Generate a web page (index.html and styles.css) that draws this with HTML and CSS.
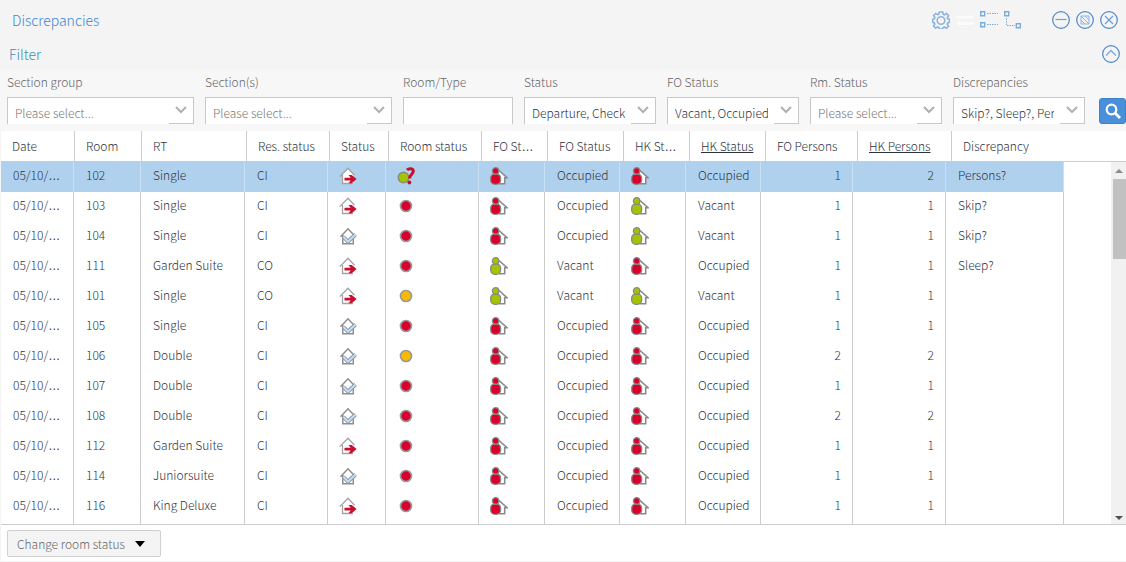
FILE: index.html
```html
<!DOCTYPE html>
<html lang="en">
<head>
<meta charset="utf-8">
<title>Discrepancies</title>
<link rel="stylesheet" href="styles.css">
</head>
<body>
<svg class="defs" aria-hidden="true">
  <symbol id="departure" viewBox="0 0 18 18">
    <path d="M3.500 8v8.500h11V8L9 2z" fill="#fff"/>
    <path d="M.7 9.600 9 1.200l6.500 7M3.500 8v8.500h10.500" fill="none" stroke="#a3a3a3" stroke-width="1.300"/>
    <path d="M5.500 10.800h6.200L9.500 8h3.200l4.900 4.100-4.900 4.200H9.500l2.200-2.800H5.500z" fill="#c8102e"/>
  </symbol>
  <symbol id="checkin" viewBox="0 0 18 18">
    <path d="M3.500 8v9h11V8L9 2z" fill="#fff"/>
    <path d="M1.500 9.800 9 1.800l7.500 8M3.800 8v8.800h10.500V9" fill="none" stroke="#8e8e8e" stroke-width="1.500"/>
    <path d="m4.500 10 4.500 4.500L16.500 7.500" fill="none" stroke="#8495aa" stroke-width="3.800"/>
    <path d="m4.500 10 4.500 4.500L16.500 7.500" fill="none" stroke="#c9dcf0" stroke-width="2"/>
  </symbol>
  <symbol id="person" viewBox="0 0 18 18">
    <path d="M8.500 3.500 15 9v7.500H8z" fill="#fff"/>
    <path d="m9 3.500 8 7.200h-2.300v6.100H9" fill="none" stroke="#8a8a8a" stroke-width="1.600"/>
    <rect x=".7" y="7" width="9.900" height="10.300" rx="4" fill="currentColor" stroke="#888" stroke-width="1.300"/>
    <circle cx="5.600" cy="3.900" r="3.200" fill="currentColor" stroke="#888" stroke-width="1.300"/>
  </symbol>
  <symbol id="dot" viewBox="0 0 18 18">
    <circle cx="9" cy="9" r="5.500" fill="currentColor" stroke="#999" stroke-width="1.700"/>
  </symbol>
  <symbol id="unknown" viewBox="0 0 18 18">
    <circle cx="6.500" cy="10.500" r="5.300" fill="#a5c400" stroke="#8a8a7a" stroke-width="1.400"/>
    <path d="M10 3c2-2 6.300-1.800 6.300 1.300 0 3-3.500 3-3.700 7.200" fill="none" stroke="#c8102e" stroke-width="3"/>
    <circle cx="12.400" cy="15.500" r="1.900" fill="#c8102e"/>
  </symbol>
</svg>

<main class="window">
  <header class="titlebar">
    <h1 class="title">Discrepancies</h1>
    <div class="tools">
      <button class="tool" aria-label="Settings"><svg viewBox="0 0 18 18" fill="none" stroke="#8db2e0" stroke-width="1.600"><path d="M7.300 1h3.400l.5 2.200 1.300.6 2-1.300 2.100 2.100-1.300 2 .5 1.200 1.700.5v3l-1.800.6-.5 1.300 1.300 1.900-2.100 2.200-2-1.300-1.200.5-.5 1.500H7.300l-.5-1.600-1.200-.5-2 1.300-2.100-2.200 1.300-1.900-.5-1.200L.7 11.300v-3l1.600-.5.6-1.300-1.300-2 2.100-2.100 2 1.300 1.100-.5z"/><circle cx="9" cy="9.500" r="3.800"/></svg></button>
      <button class="tool" aria-label="Swap"><svg viewBox="0 0 18 18" fill="#fbfbfb"><path d="M0 5h14V3l4 3-4 3V7.500H0zM18 11H4V9l-4 3.500L4 16v-2h14z"/></svg></button>
      <button class="tool" aria-label="List view"><svg viewBox="0 0 18 18" fill="none" stroke="#79add9"><path stroke-width="1.400" d="M.7.700h4v4h-4zM.7 11.700h4v4h-4z"/><path stroke-dasharray="1.500 1" d="M7 2.500h11M7 13.500h11"/></svg></button>
      <button class="tool" aria-label="Tree view"><svg viewBox="0 0 18 18" fill="none" stroke="#79add9"><path stroke-width="1.400" d="M.7.700h4v4h-4zM12.300 12.700h4v4h-4z"/><path stroke-dasharray="1.500 1" d="M2.500 7.500v7H11"/></svg></button>
    </div>
    <div class="controls">
      <button class="tool" aria-label="Minimize"><svg viewBox="0 0 18 18" fill="none" stroke="#6f9fdb"><circle cx="9" cy="9" r="8.300" stroke="#5089c4" stroke-width="1.200"/><path d="M3.500 8.500h11" stroke-width="1.200"/></svg></button>
      <button class="tool" aria-label="Restore"><svg viewBox="0 0 18 18" fill="none" stroke="#8fb2e6"><circle cx="9" cy="9" r="8.300" stroke="#5089c4" stroke-width="1.200"/><path d="M5 5h8v8H5zM5 5l8 8M5 9l4 4M9 5l4 4"/></svg></button>
      <button class="tool" aria-label="Close"><svg viewBox="0 0 18 18" fill="none" stroke="#6f9fdb"><circle cx="9" cy="9" r="8.300" stroke="#5089c4" stroke-width="1.200"/><path d="m5 5 8 8M13 5l-8 8" stroke-width="1.300"/></svg></button>
    </div>
  </header>

  <div class="filterbar">
    <h2 class="subtitle">Filter</h2>
    <button class="tool" aria-label="Collapse filter"><svg viewBox="0 0 18 18" fill="none" stroke="#86abe0"><circle cx="9" cy="9" r="8.300" stroke="#5089c4" stroke-width="1.200"/><path d="m4 10.500 5-5 5 5" stroke-width="1.500"/></svg></button>
  </div>

  <form class="filters">
    <label class="field">Section group<span class="box"><select class="input placeholder"><option>Please select...</option></select><svg class="arrow" viewBox="0 0 12 8"><path d="m1 1 5 5 5-5"/></svg></span></label>
    <label class="field">Section(s)<span class="box"><select class="input placeholder"><option>Please select...</option></select><svg class="arrow" viewBox="0 0 12 8"><path d="m1 1 5 5 5-5"/></svg></span></label>
    <label class="field">Room/Type<span class="box"><input class="input plain" type="text"></span></label>
    <label class="field">Status<span class="box"><select class="input"><option>Departure, Check</option></select><svg class="arrow" viewBox="0 0 12 8"><path d="m1 1 5 5 5-5"/></svg></span></label>
    <label class="field">FO Status<span class="box"><select class="input"><option>Vacant, Occupied</option></select><svg class="arrow" viewBox="0 0 12 8"><path d="m1 1 5 5 5-5"/></svg></span></label>
    <label class="field">Rm. Status<span class="box"><select class="input placeholder"><option>Please select...</option></select><svg class="arrow" viewBox="0 0 12 8"><path d="m1 1 5 5 5-5"/></svg></span></label>
    <label class="field">Discrepancies<span class="box"><select class="input"><option>Skip?, Sleep?, Per</option></select><svg class="arrow" viewBox="0 0 12 8"><path d="m1 1 5 5 5-5"/></svg></span></label>
    <button class="search" type="button" aria-label="Search"><svg viewBox="0 0 16 16" fill="none" stroke="#fff"><circle cx="6.500" cy="6.500" r="4.800" stroke-width="2.200"/><path d="m10 10 5 5" stroke-width="2.800"/></svg></button>
  </form>

  <section class="grid">
    <table class="head">
      <colgroup><col class="h1"><col class="h2"><col class="h3"><col class="h4"><col class="h5"><col class="h6"><col class="h7"><col class="h8"><col class="h9"><col class="h10"><col class="h11"><col class="h12"><col></colgroup>
      <thead><tr><th>Date</th><th>Room</th><th>RT</th><th>Res. status</th><th>Status</th><th>Room status</th><th>FO St<span class="dots">…</span></th><th>FO Status</th><th>HK St<span class="dots">…</span></th><th><u>HK Status</u></th><th>FO Persons</th><th><u>HK Persons</u></th><th>Discrepancy</th></tr></thead>
    </table>
    <div class="viewport">
      <table class="body">
        <colgroup><col class="b1"><col class="b2"><col class="b3"><col class="b4"><col class="b5"><col class="b6"><col class="b7"><col class="b8"><col class="b9"><col class="b10"><col class="b11"><col class="b12"><col class="b13"></colgroup>
        <tbody id="rows"></tbody>
      </table>
      <div class="scrollbar"><span class="up"></span><span class="thumb"></span><span class="down"></span></div>
    </div>
  </section>

  <footer class="footer">
    <button class="change">Change room status<span class="caret"></span></button>
  </footer>
</main>
<script src="rows.js"></script>
</body>
</html>
```
FILE: rows.js
```js
const rows = [
  ['102', 'Single', 'CI', 'departure', 'unknown', 'Occupied', 'Occupied', 1, 2, 'Persons?'],
  ['103', 'Single', 'CI', 'departure', 'red', 'Occupied', 'Vacant', 1, 1, 'Skip?'],
  ['104', 'Single', 'CI', 'checkin', 'red', 'Occupied', 'Vacant', 1, 1, 'Skip?'],
  ['111', 'Garden Suite', 'CO', 'departure', 'red', 'Vacant', 'Occupied', 1, 1, 'Sleep?'],
  ['101', 'Single', 'CO', 'departure', 'amber', 'Vacant', 'Vacant', 1, 1, ''],
  ['105', 'Single', 'CI', 'checkin', 'red', 'Occupied', 'Occupied', 1, 1, ''],
  ['106', 'Double', 'CI', 'checkin', 'amber', 'Occupied', 'Occupied', 2, 2, ''],
  ['107', 'Double', 'CI', 'checkin', 'red', 'Occupied', 'Occupied', 1, 1, ''],
  ['108', 'Double', 'CI', 'checkin', 'red', 'Occupied', 'Occupied', 2, 2, ''],
  ['112', 'Garden Suite', 'CI', 'departure', 'red', 'Occupied', 'Occupied', 1, 1, ''],
  ['114', 'Juniorsuite', 'CI', 'checkin', 'red', 'Occupied', 'Occupied', 1, 1, ''],
  ['116', 'King Deluxe', 'CI', 'departure', 'red', 'Occupied', 'Occupied', 1, 1, '']
];
const icon = (id, tone = '') => `<td class="ic"><svg class="icon ${tone}"><use href="#${id}"/></svg></td>`;
const person = (s) => icon('person', s === 'Vacant' ? 'green' : 'red');
document.getElementById('rows').innerHTML = rows.map((r, i) => `<tr${i ? '' : ' class="selected"'}>
  <td>05/10/<span class="dots">…</span></td><td>${r[0]}</td><td>${r[1]}</td><td>${r[2]}</td>${icon(r[3])}
  ${r[4] === 'unknown' ? icon('unknown') : icon('dot', r[4])}
  ${person(r[5])}<td>${r[5]}</td>${person(r[6])}<td>${r[6]}</td>
  <td class="num">${r[7]}</td><td class="num">${r[8]}</td><td>${r[9]}</td></tr>`).join('') +
  `<tr class="rest">${'<td></td>'.repeat(13)}</tr>`;
```
FILE: styles.css
```css
* { box-sizing: border-box; }
body {
  margin: 0;
  font: 300 12px/18px "Noto Sans CJK SC", "Open Sans", sans-serif;
  color: #2c3440;
}
button, input, select { font: inherit; color: inherit; }
.defs { position: absolute; width: 0; height: 0; }
.window {
  display: flex;
  flex-direction: column;
  height: 100vh;
  min-height: 400px;
  background: #f4f4f4;
  padding: 0 0 1px 1px;
}
.titlebar { display: flex; align-items: center; height: 40px; padding: 0 8px 0 11px; }
.title, .subtitle { margin: 0; font-size: 14px; line-height: 20px; font-weight: 300; color: #3d84d6; }
.subtitle { color: #3a8fc0; }
.title { flex: 1; }
.tools, .controls { display: flex; gap: 6px; }
.controls { margin-left: 30px; }
.tool { width: 18px; height: 18px; padding: 0; border: 0; background: none; }
.tool svg { display: block; width: 18px; height: 18px; }
.filterbar { display: flex; align-items: center; justify-content: space-between; height: 30px; padding: 0 6px 2px 8px; }
.filters {
  display: grid;
  grid-template-columns: 187fr 187fr 110fr 132fr 132fr 132fr 132fr 30px;
  gap: 11px;
  align-items: end;
  margin-left: -1px;
  padding: 3px 0 7px 7px;
  background: #f7f7f7;
}
.field { display: flex; flex-direction: column; gap: 6px; min-width: 0; color: #666; }
.box { position: relative; display: block; height: 27px; }
.input {
  display: block;
  width: 100%;
  height: 27px;
  padding: 3px 30px 0 7px;
  border: 1px solid #c8c8c8;
  border-bottom: 0;
  border-radius: 0;
  background: linear-gradient(#c8c8c8, #c8c8c8) right bottom / 24px 1px no-repeat #fff;
  appearance: none;
  color: #2c3440;
  outline: 0;
}
.placeholder { color: #777; }
.plain { background: #fff; }
.arrow { position: absolute; right: 7px; top: 9px; width: 12px; height: 8px; fill: none; stroke: #b0b0b0; stroke-width: 2; pointer-events: none; }
.search {
  justify-self: end;
  display: grid;
  place-items: center;
  width: 27px;
  height: 26px;
  padding: 0;
  border: 1px solid #3b82c8;
  border-radius: 3px;
  background: #4a90d9;
}
.search svg { width: 16px; height: 16px; }
.grid { flex: 1; min-height: 0; display: flex; flex-direction: column; background: #fff; border-bottom: 1px solid #ccc; }
table { border-collapse: separate; border-spacing: 0; table-layout: fixed; }
th, td { padding: 0 11px 0 12px; text-align: left; font-weight: 300; white-space: nowrap; border-right: 1px solid #ccc; }
.head { width: 100%; }
th { height: 31px; padding: 0 4px 0 11px; border-bottom: 1px solid #ccc; }
th:last-child { border-right: 0; }
.dots { font-family: "Liberation Sans", sans-serif; }
.viewport { flex: 1; min-height: 0; display: flex; justify-content: space-between; overflow: hidden; }
.body { width: 1063px; align-self: flex-start; }
td { height: 30px; padding-bottom: 4px; }
.ic { padding: 0 0 2px 11px; }
.num { text-align: right; }
.selected td { background: #b0d1ee; border-color: #c8e0f6; }
.icon { display: block; width: 18px; height: 18px; }
.red { color: #d9002b; }
.green { color: #a5c400; }
.amber { color: #fbba00; }
.scrollbar { display: flex; flex-direction: column; width: 15px; background: #f1f1f1; }
.up, .down { align-self: center; width: 0; height: 0; border: 4px solid transparent; }
.up { margin: 3px 0 6px; border-bottom-color: #8a8a8a; }
.thumb { height: 80px; margin-left: 2px; background: #c1c1c1; }
.down { margin: auto 0 0; border-top-color: #505050; }
.footer { padding: 5px 6px 4px; background: #fff; }
.change {
  display: flex;
  align-items: center;
  gap: 10px;
  height: 27px;
  padding: 0 15px 0 9px;
  border: 1px solid #d0d0d0;
  border-radius: 2px;
  background: #f4f4f4;
  color: #666;
}
.caret { border: 5px solid transparent; border-top: 6px solid #000; border-bottom: 0; }
.h1 { width: 74px; } .h2 { width: 67px; } .h3 { width: 105px; } .h4 { width: 83px; }
.h5 { width: 59px; } .h6 { width: 93px; } .h7 { width: 66px; } .h8 { width: 76px; }
.h9 { width: 66px; } .h10 { width: 76px; } .h11 { width: 92px; } .h12 { width: 94px; }
.b1 { width: 73px; } .b2 { width: 67px; } .b3 { width: 104px; } .b4 { width: 83px; }
.b5 { width: 58px; } .b6 { width: 93px; } .b7 { width: 66px; } .b8 { width: 75px; }
.b9 { width: 66px; } .b10 { width: 75px; } .b11 { width: 92px; } .b12 { width: 93px; } .b13 { width: 118px; }
```
